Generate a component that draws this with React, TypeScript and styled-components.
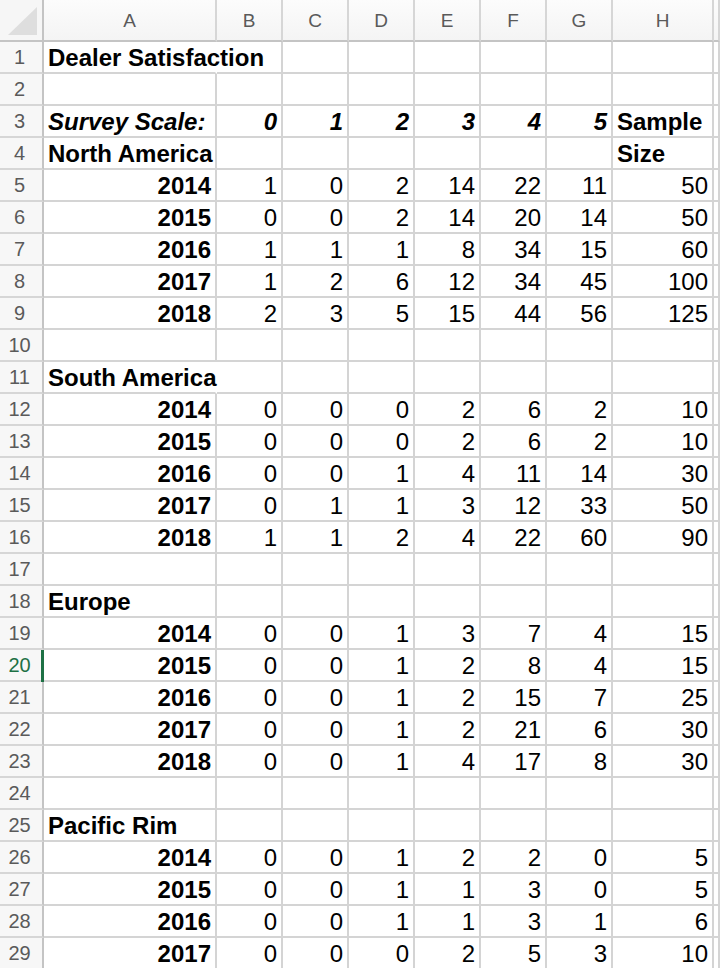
import styled, { createGlobalStyle } from 'styled-components';

const GlobalStyle = createGlobalStyle`
  html, body {
    margin: 0;
    padding: 0;
    background: #ffffff;
    overflow: hidden;
  }
`;

type Cell = { v: string | number; b?: boolean; i?: boolean; left?: boolean; span?: boolean };

const columns = ['A', 'B', 'C', 'D', 'E', 'F', 'G', 'H', ''];

const year = (y: number, vals: number[]): Cell[] => [
  { v: y, b: true },
  ...vals.map((v) => ({ v })),
];

const title = (text: string, span = false): Cell[] => [{ v: text, b: true, left: true, span }];

const rows: Cell[][] = [
  title('Dealer Satisfaction', true),
  [],
  [
    { v: 'Survey Scale:', b: true, i: true, left: true },
    ...[0, 1, 2, 3, 4, 5].map((v) => ({ v, b: true, i: true })),
    { v: 'Sample', b: true, left: true },
  ],
  [{ v: 'North America', b: true, left: true }, {}, {}, {}, {}, {}, {}, { v: 'Size', b: true, left: true }] as Cell[],
  year(2014, [1, 0, 2, 14, 22, 11, 50]),
  year(2015, [0, 0, 2, 14, 20, 14, 50]),
  year(2016, [1, 1, 1, 8, 34, 15, 60]),
  year(2017, [1, 2, 6, 12, 34, 45, 100]),
  year(2018, [2, 3, 5, 15, 44, 56, 125]),
  [],
  title('South America', true),
  year(2014, [0, 0, 0, 2, 6, 2, 10]),
  year(2015, [0, 0, 0, 2, 6, 2, 10]),
  year(2016, [0, 0, 1, 4, 11, 14, 30]),
  year(2017, [0, 1, 1, 3, 12, 33, 50]),
  year(2018, [1, 1, 2, 4, 22, 60, 90]),
  [],
  title('Europe'),
  year(2014, [0, 0, 1, 3, 7, 4, 15]),
  year(2015, [0, 0, 1, 2, 8, 4, 15]),
  year(2016, [0, 0, 1, 2, 15, 7, 25]),
  year(2017, [0, 0, 1, 2, 21, 6, 30]),
  year(2018, [0, 0, 1, 4, 17, 8, 30]),
  [],
  title('Pacific Rim'),
  year(2014, [0, 0, 1, 2, 2, 0, 5]),
  year(2015, [0, 0, 1, 1, 3, 0, 5]),
  year(2016, [0, 0, 1, 1, 3, 1, 6]),
  year(2017, [0, 0, 0, 2, 5, 3, 10]),
];

const activeRow = 20;

export default function App() {
  return (
    <>
      <GlobalStyle />
      <Sheet>
        <Corner>
          <svg width='42' height='40' viewBox='0 0 42 40'>
            <polygon points='8,35 37,35 37,7' fill='#dedede' />
          </svg>
        </Corner>
        {columns.map((c, i) => (
          <ColHeader key={`col-${i}`}>{c}</ColHeader>
        ))}
        {rows.map((row, r) => {
          const n = r + 1;
          return [
            <RowHeader key={`rh-${n}`} $active={n === activeRow}>
              {n}
            </RowHeader>,
            ...columns.map((_, c) => {
              const cell = row[c];
              return (
                <DataCell
                  key={`c-${n}-${c}`}
                  $bold={cell?.b}
                  $italic={cell?.i}
                  $left={cell?.left}
                  $span={cell?.span}>
                  {cell?.v !== undefined ? <span>{cell.v}</span> : null}
                </DataCell>
              );
            }),
          ];
        })}
      </Sheet>
    </>
  );
}

const Sheet = styled.div`
  display: grid;
  grid-template-columns: 44px 173px repeat(6, 66px) 101px 1fr;
  grid-template-rows: 42px repeat(29, 32px);
  width: 720px;
  height: 968px;
  overflow: hidden;
  font-family: 'Liberation Sans', Arial, Helvetica, sans-serif;
  color: #000000;
`;

const Corner = styled.div`
  box-sizing: border-box;
  background: #f6f6f6;
  border-right: 2px solid #c4c4c4;
  border-bottom: 2px solid #c4c4c4;
  display: flex;
  align-items: flex-start;
  justify-content: flex-start;

  svg {
    display: block;
  }
`;

const ColHeader = styled.div`
  box-sizing: border-box;
  background: linear-gradient(#fcfcfc, #f4f4f4);
  border-right: 2px solid #d6d6d6;
  border-bottom: 2px solid #c4c4c4;
  display: flex;
  align-items: center;
  justify-content: center;
  font-size: 19px;
  color: #5a5a5a;
  padding-top: 1px;
`;

const RowHeader = styled.div<{ $active?: boolean }>`
  box-sizing: border-box;
  position: relative;
  background: #f7f7f7;
  border-right: 2px solid #c4c4c4;
  border-bottom: 2px solid #d6d6d6;
  display: flex;
  align-items: center;
  justify-content: center;
  padding-right: 3px;
  padding-top: 1px;
  font-size: 20px;
  color: ${(p) => (p.$active ? '#1e7145' : '#5a5a5a')};

  &::after {
    content: '';
    display: ${(p) => (p.$active ? 'block' : 'none')};
    position: absolute;
    top: 0;
    bottom: -2px;
    right: -2px;
    width: 3px;
    background: #1e7145;
  }
`;

const DataCell = styled.div<{ $bold?: boolean; $italic?: boolean; $left?: boolean; $span?: boolean }>`
  box-sizing: border-box;
  position: relative;
  min-width: 0;
  border-right: 2px solid ${(p) => (p.$span ? 'transparent' : '#d4d4d4')};
  border-bottom: 2px solid #d4d4d4;
  display: flex;
  align-items: flex-end;
  justify-content: ${(p) => (p.$left ? 'flex-start' : 'flex-end')};
  padding: 0 ${(p) => (p.$left ? '0' : '4px')} 0 ${(p) => (p.$left ? '4px' : '0')};
  font-size: 24px;
  line-height: 28px;
  font-weight: ${(p) => (p.$bold ? 700 : 400)};
  font-style: ${(p) => (p.$italic ? 'italic' : 'normal')};
  white-space: nowrap;
  overflow: visible;
  z-index: ${(p) => (p.$span ? 1 : 0)};

  span {
    display: block;
  }
`;
